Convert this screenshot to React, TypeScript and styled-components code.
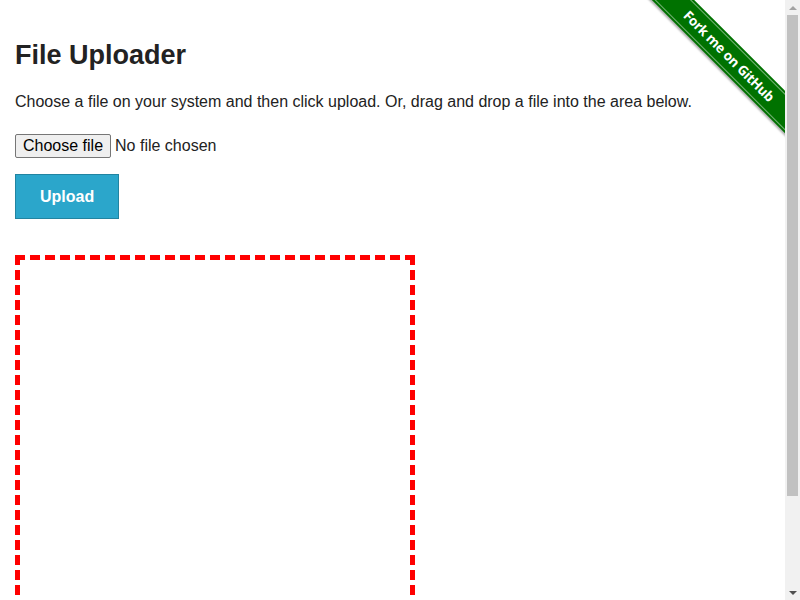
import React from 'react'
import styled, { createGlobalStyle } from 'styled-components'

const GlobalStyle = createGlobalStyle`
  html, body {
    margin: 0;
    padding: 0;
    background: #fff;
  }
  body {
    font-family: "Liberation Sans", Arial, sans-serif;
    font-size: 16px;
    color: #222;
  }
`

const Page = styled.div`
  position: relative;
  margin-right: 15px;
`

const Content = styled.section`
  padding: 36px 15px 0;
`

const Title = styled.h3`
  margin: 0;
  font-size: 27px;
  line-height: 38px;
  font-weight: bold;
  color: #222;
`

const Intro = styled.p`
  margin: 16px 0 0;
  font-size: 16px;
  line-height: 24px;
`

const UploadForm = styled.form`
  display: flex;
  flex-direction: column;
  align-items: flex-start;
  margin-top: 20px;
`

const FilePicker = styled.label`
  display: flex;
  align-items: center;
  gap: 4px;
  height: 24px;
  font-size: 16px;
  color: #222;
  cursor: pointer;

  input {
    display: none;
  }
`

const PickerButton = styled.span`
  display: inline-flex;
  align-items: center;
  box-sizing: border-box;
  height: 24px;
  padding: 0 7px;
  background: #efefef;
  border: 1px solid #767676;
  border-radius: 2px;
  color: #000;
`

const UploadButton = styled.button`
  margin-top: 16px;
  height: 45px;
  padding: 0 24px;
  box-sizing: border-box;
  background: #2ba6cb;
  border: 1px solid #2284a1;
  color: #fff;
  font-family: "Liberation Sans", Arial, sans-serif;
  font-size: 16px;
  font-weight: bold;
  cursor: pointer;
`

const DropZone = styled.div`
  margin-top: 36px;
  width: 400px;
  height: 400px;
  box-sizing: border-box;
  border: 5px dashed red;
`

const Footer = styled.footer`
  margin-top: 20px;
  padding: 10px 0 12px;
  border-top: 1px solid #ddd;
  text-align: center;
  font-size: 13px;
  color: #222;
`

const RibbonCorner = styled.div`
  position: absolute;
  top: 0;
  right: 0;
  width: 149px;
  height: 149px;
  overflow: hidden;
  pointer-events: none;
`

const Ribbon = styled.a`
  position: absolute;
  left: -7px;
  top: 41px;
  width: 200px;
  height: 30px;
  transform: rotate(45deg);
  background: #007200;
  box-shadow: 0 2px 2px rgba(0, 0, 0, 0.3);
  color: #fff;
  text-decoration: none;
  display: flex;
  align-items: center;
  justify-content: center;
  font-family: "Open Sans", "DejaVu Sans", sans-serif;
  font-weight: bold;
  font-size: 13.5px;
  letter-spacing: -0.3px;

  &::before {
    content: '';
    position: absolute;
    left: 0;
    right: 0;
    top: 2px;
    bottom: 2px;
    border-top: 1px solid rgba(255, 255, 255, 0.45);
    border-bottom: 1px solid rgba(255, 255, 255, 0.45);
  }
`

/* classic window scrollbar, drawn over the right edge */
const ScrollTrack = styled.div`
  position: fixed;
  top: 0;
  right: 0;
  bottom: 0;
  width: 15px;
  background: #f1f1f1;
  display: flex;
  flex-direction: column;
  align-items: center;
`

const ScrollArrow = styled.div<{ $down?: boolean; $dim?: boolean }>`
  width: 15px;
  height: 15px;
  flex: none;
  display: flex;
  align-items: center;
  justify-content: center;

  &::after {
    content: '';
    width: 0;
    height: 0;
    border-left: 4px solid transparent;
    border-right: 4px solid transparent;
    ${(p) =>
      p.$down
        ? `border-top: 4px solid ${p.$dim ? '#a3a3a3' : '#505050'};`
        : `border-bottom: 4px solid ${p.$dim ? '#a3a3a3' : '#505050'};`}
  }
`

const ScrollArea = styled.div`
  flex: 1;
  width: 11px;
`

const ScrollThumb = styled.div`
  width: 11px;
  background: #c1c1c1;
`

function App() {
  return (
    <Page>
      <GlobalStyle />
      <Content>
        <Title>File Uploader</Title>
        <Intro>
          Choose a file on your system and then click upload. Or, drag and drop a file into the area below.
        </Intro>
        <UploadForm onSubmit={(e) => e.preventDefault()}>
          <FilePicker>
            <input type="file" />
            <PickerButton>Choose file</PickerButton>
            <span>No file chosen</span>
          </FilePicker>
          <UploadButton type="submit">Upload</UploadButton>
        </UploadForm>
        <DropZone />
      </Content>
      <Footer>Powered by Elemental Selenium</Footer>
      <RibbonCorner>
        <Ribbon href="#">Fork me on GitHub</Ribbon>
      </RibbonCorner>
      <ScrollTrack>
        <ScrollArrow $dim />
        <ScrollArea>
          <ScrollThumb style={{ height: '84.4%' }} />
        </ScrollArea>
        <ScrollArrow $down />
      </ScrollTrack>
    </Page>
  )
}

export default App
